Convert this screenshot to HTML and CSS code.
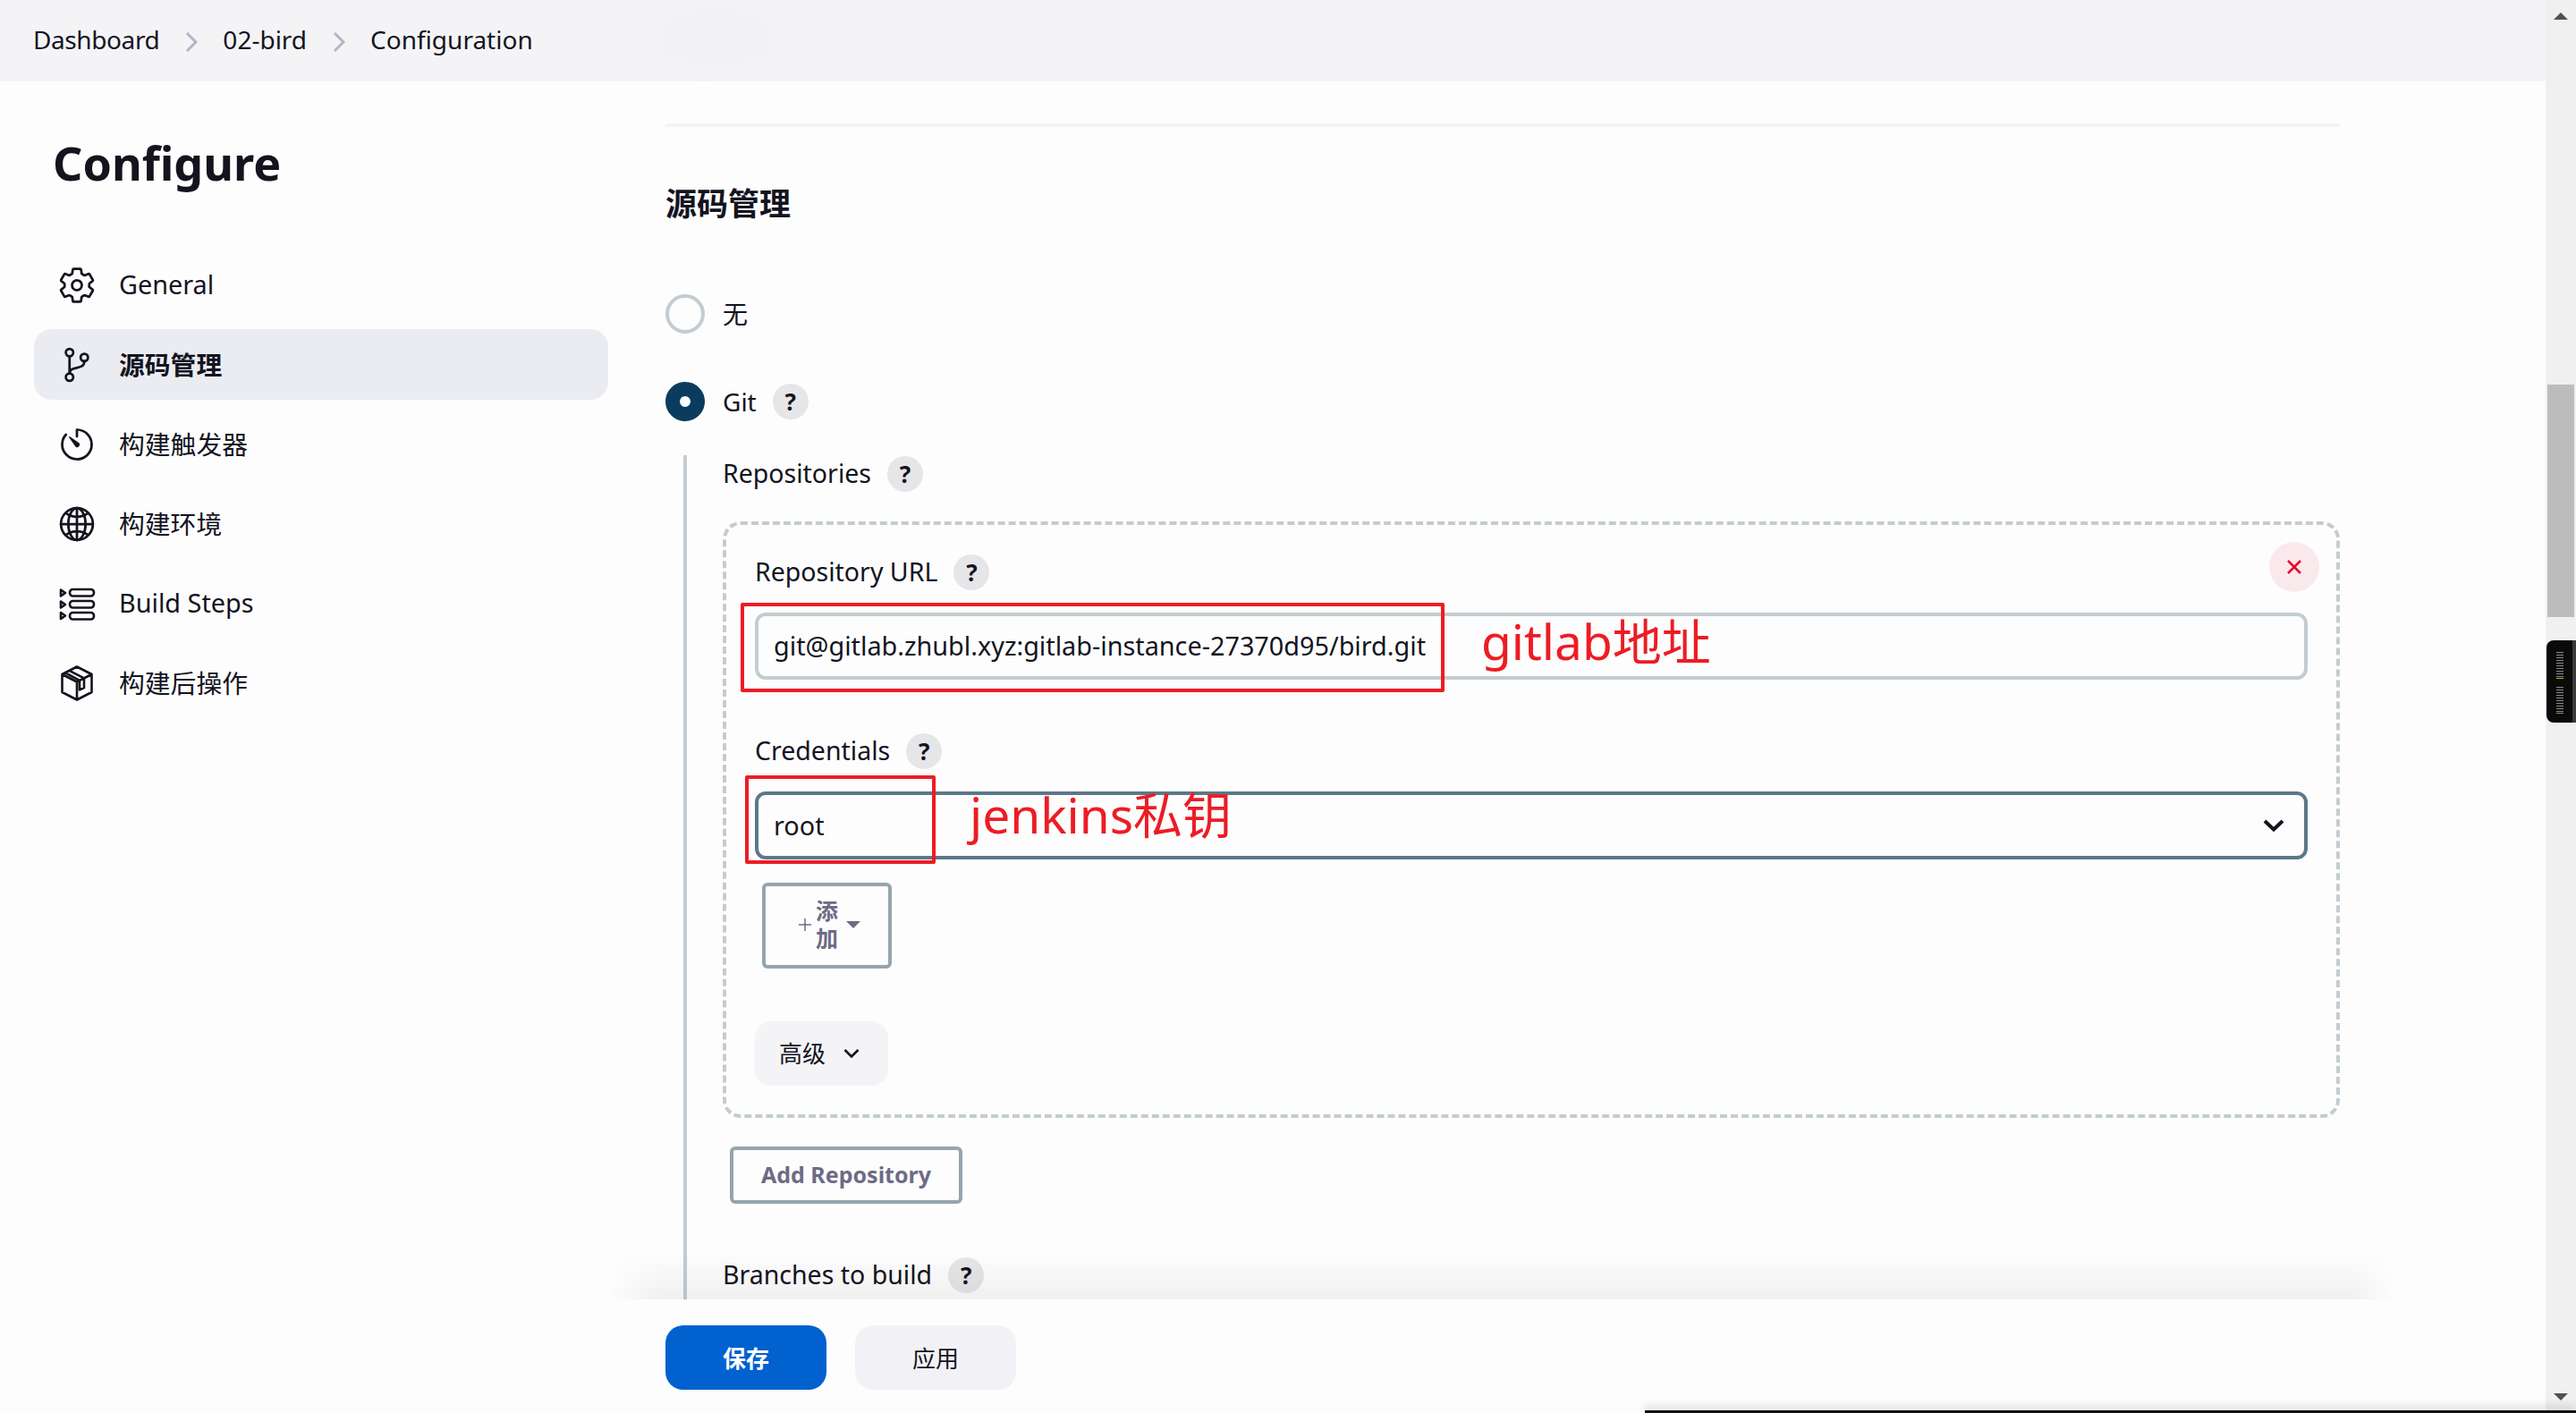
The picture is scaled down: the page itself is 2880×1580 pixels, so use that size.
FILE: index.html
```html
<!DOCTYPE html>
<html lang="zh-CN">
<head>
  <meta charset="UTF-8" />
  <title>02-bird Configuration</title>
  <link rel="stylesheet" href="styles.css">
</head>
<body>
<div class="page">
  <div class="content">

    <!-- Breadcrumb -->
    <div class="breadcrumb">
      <span class="crumb first">Dashboard</span>
      <svg class="crumb-sep" viewBox="0 0 14 24"><polyline points="2,2 12,12 2,22"/></svg>
      <span class="crumb">02-bird</span>
      <svg class="crumb-sep" viewBox="0 0 14 24"><polyline points="2,2 12,12 2,22"/></svg>
      <span class="crumb">Configuration</span>
    </div>

    <div class="layout">
      <!-- Sidebar -->
      <div class="sidebar">
        <h1 class="side-title">Configure</h1>
        <div class="side-nav">
          <div class="side-item">
            <svg class="side-icon" viewBox="0 0 512 512"><path class="line" d="M262.29 192.31a64 64 0 1057.4 57.4 64.13 64.13 0 00-57.4-57.4zM416.39 256a154.34 154.34 0 01-1.53 20.79l45.21 35.46a10.81 10.81 0 012.45 13.75l-42.77 74a10.81 10.81 0 01-13.14 4.59l-44.9-18.08a16.11 16.11 0 00-15.17 1.75A164.48 164.48 0 01325 400.8a15.94 15.94 0 00-8.82 12.14l-6.73 47.89a11.08 11.08 0 01-10.68 9.17h-85.54a11.11 11.11 0 01-10.69-8.87l-6.72-47.82a16.07 16.07 0 00-9-12.22 155.3 155.3 0 01-21.46-12.57 16 16 0 00-15.11-1.71l-44.89 18.07a10.81 10.81 0 01-13.14-4.58l-42.77-74a10.8 10.8 0 012.45-13.75l38.21-30a16.05 16.05 0 006-14.08c-.36-4.17-.58-8.33-.58-12.5s.21-8.27.58-12.35a16 16 0 00-6.07-13.94l-38.19-30A10.81 10.81 0 0149.48 186l42.77-74a10.81 10.81 0 0113.14-4.59l44.9 18.08a16.11 16.11 0 0015.17-1.75A164.48 164.48 0 01187 111.2a15.94 15.94 0 008.82-12.14l6.73-47.89A11.08 11.08 0 01213.23 42h85.54a11.11 11.11 0 0110.69 8.87l6.72 47.82a16.07 16.07 0 009 12.22 155.3 155.3 0 0121.46 12.57 16 16 0 0015.11 1.71l44.89-18.07a10.81 10.81 0 0113.14 4.58l42.77 74a10.8 10.8 0 01-2.45 13.75l-38.21 30a16.05 16.05 0 00-6.05 14.08c.33 4.14.55 8.3.55 12.47z"/></svg>
            <span>General</span>
          </div>
          <div class="side-item active">
            <svg class="side-icon" viewBox="0 0 512 512"><circle class="line" cx="160" cy="96" r="48"/><circle class="line" cx="160" cy="416" r="48"/><path class="line" d="M160 368V144"/><circle class="line" cx="352" cy="160" r="48"/><path class="line" d="M352 208c0 128-192 48-192 160"/></svg>
            <span>源码管理</span>
          </div>
          <div class="side-item">
            <svg class="side-icon" viewBox="0 0 512 512"><path class="line" d="M112.91 128A191.85 191.85 0 0064 254c-1.18 106.35 85.65 193.8 192 194 106.2.2 192-85.83 192-192 0-104.54-83.55-189.61-187.5-192a4.36 4.36 0 00-4.5 4.37V152"/><path class="solid" d="M233.38 278.63l-79-113a8.13 8.13 0 0111.32-11.32l113 79a32.5 32.5 0 01-37 53.34 33.21 33.21 0 01-8.32-8.02z"/></svg>
            <span>构建触发器</span>
          </div>
          <div class="side-item">
            <svg class="side-icon" viewBox="0 0 512 512"><path class="line" d="M256 48C141.13 48 48 141.13 48 256s93.13 208 208 208 208-93.13 208-208S370.87 48 256 48z"/><path class="line" d="M256 48c-58.07 0-112.67 93.31-112.67 208S197.93 464 256 464s112.67-93.31 112.67-208S314.07 48 256 48z"/><path class="line" d="M117.33 117.33c38.24 27.15 86.38 43.34 138.67 43.34s100.43-16.19 138.67-43.34M394.67 394.67c-38.24-27.15-86.38-43.34-138.67-43.34s-100.43 16.19-138.67 43.34M256 48v416M464 256H48"/></svg>
            <span>构建环境</span>
          </div>
          <div class="side-item">
            <svg class="side-icon thin" viewBox="0 0 44 44"><path d="M4 6.5l5 3.5-5 3.500zM4 19.500l5 3.500-5 3.500zM4 32l5 3.500-5 3.500z"/><rect x="14" y="6" width="27" height="7.500" rx="3.500"/><rect x="14" y="19" width="27" height="7.500" rx="3.500"/><rect x="14" y="32" width="27" height="7.500" rx="3.500"/></svg>
            <span>Build Steps</span>
          </div>
          <div class="side-item">
            <svg class="side-icon thin" viewBox="0 0 44 44"><path d="M22 3.500l16.500 8.500v20l-16.500 8.500-16.500-8.500v-20zM5.500 12l16.500 8.500 16.500-8.500M22 20.500v20M13.500 7.800l16.500 8.600v10.600l-5 2.400v-10.600l-16.500-8.800"/></svg>
            <span>构建后操作</span>
          </div>
        </div>
      </div>

      <!-- Source code management form -->
      <div class="main">
        <div class="divider"></div>
        <h2 class="section-title">源码管理</h2>

        <div class="radio-row first">
          <span class="radio"></span>
          <span class="radio-label">无</span>
        </div>
        <div class="radio-row second">
          <span class="radio checked"></span>
          <span>Git</span>
          <span class="help">?</span>
        </div>

        <div class="git-options">
          <div class="label-row">
            <span>Repositories</span>
            <span class="help">?</span>
          </div>

          <div class="repo-box">
            <div class="remove-btn">
              <svg viewBox="0 0 16 16"><path d="M1 1l14 14M15 1L1 15"/></svg>
            </div>

            <div class="label-row">
              <span>Repository URL</span>
              <span class="help">?</span>
            </div>
            <div class="field">git@gitlab.zhubl.xyz:gitlab-instance-27370d95/bird.git</div>

            <div class="label-row credentials">
              <span>Credentials</span>
              <span class="help">?</span>
            </div>
            <div class="field select">
              <span>root</span>
              <svg class="select-arrow" viewBox="0 0 24 14"><polyline points="2,2 12,11.500 22,2"/></svg>
            </div>

            <button class="outline-btn add-btn">
              <svg class="plus" viewBox="0 0 14 14"><path d="M7 0v14M0 7h14"/></svg>
              <span class="add-text">添加</span>
              <span class="caret"></span>
            </button>

            <button class="advanced-btn">
              <span class="advanced-label">高级</span>
              <svg viewBox="0 0 18 10"><polyline points="1.500,1 9,8.500 16.500,1"/></svg>
            </button>
          </div>

          <button class="outline-btn add-repo">Add Repository</button>

          <div class="label-row branches">
            <span>Branches to build</span>
            <span class="help">?</span>
          </div>
        </div>
      </div>
    </div>

    <!-- Sticky save bar -->
    <div class="bottom-bar">
      <button class="save-btn">保存</button>
      <button class="apply-btn">应用</button>
    </div>
  </div>

  <!-- Scrollbar -->
  <div class="scrollbar">
    <span class="arrow up"></span>
    <div class="thumb"></div>
    <span class="arrow down"></span>
  </div>

  <!-- Red notes drawn over the screenshot -->
  <div class="note-box note-url"></div>
  <div class="note-box note-root"></div>
  <div class="note-text note-gitlab">gitlab地址</div>
  <div class="note-text note-jenkins">jenkins私钥</div>

  <!-- Desktop widgets on top of the window -->
  <div class="meter">
    <div class="meter-bar orange"></div>
    <div class="meter-bar green"></div>
  </div>
  <div class="taskbar-edge"></div>
</div>
</body>
</html>
```

FILE: styles.css
```css
* {
  box-sizing: border-box;
}

body {
  margin: 0;
  font-family: "Noto Sans", "Noto Sans CJK SC", sans-serif;
  font-size: 28.8px;
  color: #14141f;
  background-color: #fdfdfd;
}

h1, h2 {
  margin: 0;
}

button {
  font-family: inherit;
  color: inherit;
  cursor: pointer;
}

.page {
  position: relative;
  display: flex;
  width: 2880px;
  height: 1580px;
  overflow: hidden;
}

.content {
  position: relative;
  flex: 1;
  min-width: 0;
  overflow: hidden;
}

/* Breadcrumb */
.breadcrumb {
  display: flex;
  align-items: center;
  height: 91px;
  padding: 0 0 3px 37px;
  background: radial-gradient(ellipse 110px 60px at 800px 42px, #f1f1f4, transparent), #f4f4f7;
  font-size: 28px;
}

.crumb.first {
  letter-spacing: -0.4px;
}

.crumb-sep {
  width: 14px;
  height: 24px;
  margin: 5px 28px 0 29px;
  fill: none;
  stroke: #b4b4c4;
  stroke-width: 3;
}

.layout {
  display: flex;
}

/* Sidebar */
.sidebar {
  width: 744px;
  flex-shrink: 0;
  padding: 58px 64px 0 38px;
}

.side-title {
  height: 70px;
  padding-left: 21px;
  font-size: 52px;
  line-height: 66px;
  font-weight: 700;
}

.side-nav {
  display: flex;
  flex-direction: column;
  gap: 10px;
  margin-top: 60px;
}

.side-item {
  display: flex;
  align-items: center;
  gap: 25px;
  height: 79px;
  padding-left: 26px;
  border-radius: 20px;
}

.side-item span {
  margin-bottom: 2px;
}

.side-item.active {
  background: #ebecf1;
  font-weight: 700;
}

.side-icon {
  width: 44px;
  height: 44px;
  flex-shrink: 0;
}

.side-icon .line {
  fill: none;
  stroke: #14141f;
  stroke-width: 32;
  stroke-linecap: round;
  stroke-linejoin: round;
}

.side-icon .solid {
  fill: #14141f;
}

.side-icon.thin {
  fill: none;
  stroke: #14141f;
  stroke-width: 2.6;
  stroke-linejoin: round;
}

/* Main form */
.main {
  width: 1872px;
  padding-top: 47px;
}

.divider {
  height: 4px;
  background: #f4f4f7;
}

.section-title {
  height: 50px;
  margin-top: 61px;
  font-size: 35px;
  line-height: 50px;
  font-weight: 700;
}

.radio-row {
  display: flex;
  align-items: center;
  height: 44px;
  font-size: 28px;
}

.radio-row.first {
  margin-top: 76px;
}

.radio-row.second {
  margin-top: 54px;
}

.radio-label {
  margin-bottom: 3px;
}

.radio {
  width: 44px;
  height: 44px;
  margin-right: 20px;
  border: 4px solid #c3ccd1;
  border-radius: 50%;
}

.radio.checked {
  border: 16px solid #0b3c5d;
  background: #fff;
}

.help {
  display: inline-flex;
  align-items: center;
  justify-content: center;
  width: 40px;
  height: 40px;
  margin-left: 18px;
  border-radius: 50%;
  background: #e6e6e9;
  font-size: 26px;
  font-weight: 700;
}

.git-options {
  margin: 38px 0 0 20px;
  padding: 1px 0 200px 40px;
  border-left: 4px solid #c3ccd1;
}

.label-row {
  display: flex;
  align-items: center;
  height: 40px;
  font-size: 28.5px;
}

.label-row span:first-child {
  margin-bottom: 3px;
}

.repo-box {
  position: relative;
  width: 1808px;
  margin-top: 33px;
  padding: 33px 32px 32px;
  border: 4px dashed #c3ccd1;
  border-radius: 20px;
}

.remove-btn {
  position: absolute;
  top: 19px;
  right: 19px;
  display: flex;
  align-items: center;
  justify-content: center;
  width: 56px;
  height: 56px;
  border-radius: 50%;
  background: #f9e9ec;
}

.remove-btn svg {
  width: 16px;
  height: 16px;
  fill: none;
  stroke: #e6002d;
  stroke-width: 2.500;
}

.field {
  display: flex;
  align-items: center;
  height: 75px;
  margin-top: 25px;
  padding: 0 17px 2px;
  border: 4px solid #c3ccd1;
  border-radius: 12px;
}

.credentials {
  margin-top: 60px;
}

.select {
  justify-content: space-between;
  height: 76px;
  padding-right: 22px;
  border-color: #5c7889;
}

.select-arrow {
  width: 24px;
  height: 14px;
  margin-top: 2px;
  fill: none;
  stroke: #14141f;
  stroke-width: 4;
}

.outline-btn {
  display: block;
  padding: 0 0 2px;
  border: 4px solid #95a5ad;
  border-radius: 6px;
  background: transparent;
  color: #6d6b85;
  font-size: 25px;
  font-weight: 700;
}

.add-btn {
  display: flex;
  align-items: center;
  width: 145px;
  height: 96px;
  margin: 26px 0 0 8px;
  padding-left: 37px;
  line-height: 31px;
}

.plus {
  width: 14px;
  height: 14px;
  margin-right: 5px;
  fill: none;
  stroke: #6d6b85;
  stroke-width: 1.500;
}

.add-text {
  width: 25px;
}

.caret {
  width: 0;
  height: 0;
  margin-left: 9px;
  border-left: 8px solid transparent;
  border-right: 8px solid transparent;
  border-top: 8px solid #6d6b85;
}

.advanced-btn {
  display: flex;
  align-items: center;
  gap: 20px;
  width: 149px;
  height: 72px;
  margin-top: 59px;
  padding: 0 0 0 27px;
  border: none;
  border-radius: 18px;
  background: #f4f4f7;
  font-size: 26px;
}

.advanced-label {
  margin-bottom: 3px;
}

.advanced-btn svg {
  width: 18px;
  height: 10px;
  fill: none;
  stroke: #14141f;
  stroke-width: 2.600;
}

.add-repo {
  width: 260px;
  height: 64px;
  margin: 32px 0 0 8px;
}

.branches {
  margin-top: 60px;
}

/* Save bar */
.bottom-bar {
  position: absolute;
  left: 0;
  right: 0;
  bottom: 0;
  display: flex;
  gap: 32px;
  height: 127px;
  padding: 29px 0 0 744px;
  background: #fdfdfd;
}

.bottom-bar::before {
  content: "";
  position: absolute;
  top: -53px;
  left: 680px;
  right: 169px;
  height: 53px;
  background: linear-gradient(rgba(0, 0, 0, 0), rgba(0, 0, 0, 0.05));
  -webkit-mask-image: linear-gradient(to right, transparent, #000 60px, #000 calc(100% - 50px), transparent);
  mask-image: linear-gradient(to right, transparent, #000 60px, #000 calc(100% - 50px), transparent);
}

.save-btn, .apply-btn {
  width: 180px;
  height: 72px;
  border: none;
  border-radius: 20px;
  font-size: 26px;
}

.save-btn {
  background: #0061cf;
  color: #fff;
  font-weight: 700;
}

.apply-btn {
  background: #f2f2f6;
}

/* Scrollbar */
.scrollbar {
  display: flex;
  flex-direction: column;
  align-items: center;
  width: 34px;
  flex-shrink: 0;
  background: #f0f0f0;
}

.arrow {
  width: 0;
  height: 0;
  border-left: 8px solid transparent;
  border-right: 8px solid transparent;
}

.arrow.up {
  margin-top: 14px;
  border-bottom: 8px solid #505050;
}

.thumb {
  width: 30px;
  height: 260px;
  margin-top: 408px;
  background: #bcbcbc;
}

.arrow.down {
  margin-top: auto;
  margin-bottom: 14px;
  border-top: 8px solid #505050;
}

/* Red notes */
.note-box {
  position: absolute;
  border: 4px solid #ed1c24;
  border-radius: 2px;
}

.note-url {
  left: 828px;
  top: 674px;
  width: 787px;
  height: 100px;
}

.note-root {
  left: 833px;
  top: 867px;
  width: 213px;
  height: 99px;
}

.note-text {
  position: absolute;
  color: #ed1c24;
  font-size: 55px;
  line-height: 70px;
  white-space: nowrap;
}

.note-gitlab {
  left: 1656px;
  top: 682px;
}

.note-jenkins {
  left: 1084px;
  top: 876px;
}

/* Desktop widgets */
.meter {
  position: absolute;
  top: 716px;
  left: 2847px;
  display: flex;
  flex-direction: column;
  gap: 9px;
  width: 33px;
  height: 92px;
  padding: 13px 0 0 11px;
  border-right: 4px solid #3a3a3a;
  border-radius: 8px 0 0 8px;
  background: #0a0a0a;
}

.meter-bar {
  width: 8px;
  height: 30px;
  background: repeating-linear-gradient(#8a8a8a 0 1px, transparent 1px 3px);
}

.meter-bar.orange {
  border-bottom: 1px solid #e09a1e;
}

.meter-bar.green {
  border-bottom: 1px solid #6aa52f;
}

.taskbar-edge {
  position: absolute;
  left: 1839px;
  right: 0;
  bottom: 0;
  height: 3px;
  background: #111;
  box-shadow: 0 -3px 10px rgba(0, 0, 0, 0.3);
}
```
